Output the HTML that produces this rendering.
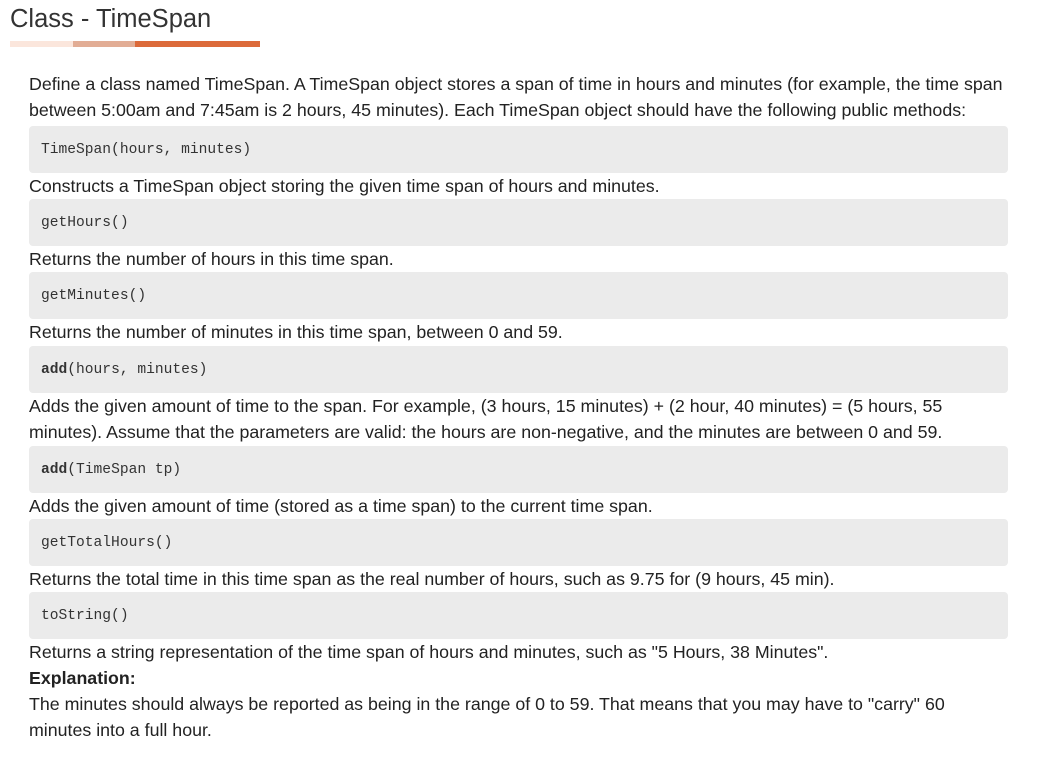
<!DOCTYPE html>
<html><head><meta charset="utf-8"><style>
body{margin:0;background:#fff;width:1037px;height:773px;overflow:hidden;font-family:"Liberation Sans",sans-serif;color:#222;}
h1{position:absolute;left:10px;top:5px;margin:0;font-weight:normal;font-size:25.5px;color:#333;}
.bar{position:absolute;top:41px;height:6px}
.c{position:absolute;left:29px;top:71px;width:979px;font-size:17.8px;line-height:26px;}
.c p{margin:0;white-space:nowrap}
.code{background:#ebebeb;border-radius:4px;height:47px;line-height:48px;padding-left:12px;font-family:"Liberation Mono",monospace;font-size:14.6px;color:#333;margin:0}
b{font-weight:bold}
</style></head><body>
<h1>Class - TimeSpan</h1>
<div class="bar" style="left:10px;width:63px;background:#fbe6dc"></div>
<div class="bar" style="left:73px;width:62px;background:#e2ad95"></div>
<div class="bar" style="left:135px;width:125px;background:#dc6a3a"></div>
<div class="c">
<p>Define a class named TimeSpan. A TimeSpan object stores a span of time in hours and minutes (for example, the time span<br>between 5:00am and 7:45am is 2 hours, 45 minutes). Each TimeSpan object should have the following public methods:</p>
<div class="code" style="margin-top:3px">TimeSpan(hours, minutes)</div>
<p>Constructs a TimeSpan object storing the given time span of hours and minutes.</p>
<div class="code">getHours()</div>
<p>Returns the number of hours in this time span.</p>
<div class="code">getMinutes()</div>
<p>Returns the number of minutes in this time span, between 0 and 59.</p>
<div class="code" style="margin-top:1px"><b>add</b>(hours, minutes)</div>
<p>Adds the given amount of time to the span. For example, (3 hours, 15 minutes) + (2 hour, 40 minutes) = (5 hours, 55<br>minutes). Assume that the parameters are valid: the hours are non-negative, and the minutes are between 0 and 59.</p>
<div class="code" style="margin-top:1px"><b>add</b>(TimeSpan tp)</div>
<p>Adds the given amount of time (stored as a time span) to the current time span.</p>
<div class="code">getTotalHours()</div>
<p>Returns the total time in this time span as the real number of hours, such as 9.75 for (9 hours, 45 min).</p>
<div class="code">toString()</div>
<p>Returns a string representation of the time span of hours and minutes, such as "5 Hours, 38 Minutes".</p>
<p><b>Explanation:</b></p>
<p>The minutes should always be reported as being in the range of 0 to 59. That means that you may have to "carry" 60<br>minutes into a full hour.</p>
</div>
</body></html>
